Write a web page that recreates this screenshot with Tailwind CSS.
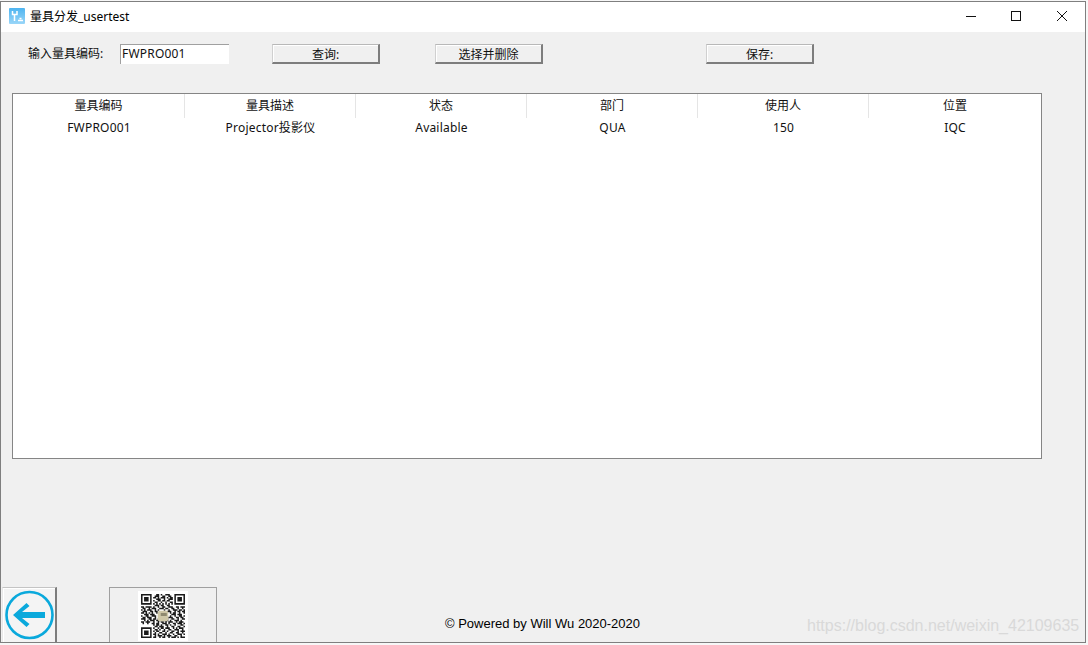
<!DOCTYPE html>
<html lang="zh">
<head>
<meta charset="utf-8">
<script src="https://cdn.jsdelivr.net/npm/@tailwindcss/browser@4"></script>
</head>
<body class="m-0 bg-[#f7f7f7]">
<div class="relative w-[1088px] h-[645px] overflow-hidden pt-px font-['Noto_Sans','Noto_Sans_CJK_SC',sans-serif] text-[12px] text-[#111]">
  <div class="flex flex-col w-[1086px] h-[642px] border border-[#7f7f7f] bg-[#f0f0f0]">
    <!-- title bar -->
    <div class="flex items-center h-[30px] shrink-0 bg-white">
      <svg class="ml-[8px] mb-[2px] w-4 h-4 shrink-0" viewBox="0 0 16 16">
        <defs><linearGradient id="g" x1="0" y1="0" x2="0" y2="1"><stop offset="0" stop-color="#4db4f0"/><stop offset="1" stop-color="#9ad6f8"/></linearGradient></defs>
        <rect width="16" height="16" rx="1" fill="url(#g)"/>
        <path d="M3.5 3v3.5h2.5M8 3v3.5h-2.5v6.5M9 12.5h5M10.5 10.5h2" stroke="#fff" stroke-width="1.5" fill="none"/>
      </svg>
      <span class="ml-[5px] text-[12px] text-black">量具分发_usertest</span>
      <div class="ml-auto flex items-center h-full">
        <svg class="w-[46px] h-[30px]" viewBox="0 0 46 30"><path d="M19 14.5h10" stroke="#111" fill="none"/></svg>
        <svg class="w-[46px] h-[30px]" viewBox="0 0 46 30"><rect x="18.5" y="9.5" width="9" height="9" stroke="#111" fill="none"/></svg>
        <svg class="w-[46px] h-[30px]" viewBox="0 0 46 30"><path d="M18 9l10 10M28 9l-10 10" stroke="#111" fill="none"/></svg>
      </div>
    </div>
    <!-- toolbar -->
    <div class="flex items-start h-[61px] shrink-0 pt-[12px]">
      <span class="ml-[27px] w-[92px] shrink-0 leading-[20px] text-[12px]">输入量具编码:</span>
      <div class="w-[109px] h-[20px] shrink-0 bg-white border-l border-t border-[#a0a0a0] pl-px leading-[18px] text-[12px] tracking-[0.2px]">FWPRO001</div>
      <button class="ml-[43px] w-[108px] h-[20px] shrink-0 bg-[#f0f0f0] border border-r-2 border-b-2 border-r-[#7d7d7d] border-b-[#7d7d7d] border-t-[#b8b8b8] border-l-[#d0d0d0] shadow-[inset_1px_1px_0_#fff] text-[12px] leading-[20px]">查询:</button>
      <button class="ml-[55px] w-[108px] h-[20px] shrink-0 bg-[#f0f0f0] border border-r-2 border-b-2 border-r-[#7d7d7d] border-b-[#7d7d7d] border-t-[#b8b8b8] border-l-[#d0d0d0] shadow-[inset_1px_1px_0_#fff] text-[12px] leading-[20px]">选择并删除</button>
      <button class="ml-[163px] w-[108px] h-[20px] shrink-0 bg-[#f0f0f0] border border-r-2 border-b-2 border-r-[#7d7d7d] border-b-[#7d7d7d] border-t-[#b8b8b8] border-l-[#d0d0d0] shadow-[inset_1px_1px_0_#fff] text-[12px] leading-[20px]">保存:</button>
    </div>
    <!-- table -->
    <div class="ml-[11px] w-[1030px] h-[366px] shrink-0 bg-white border border-[#858585]">
      <div class="grid grid-cols-[172px_171px_171px_171px_171px_1fr] h-[24px] text-center leading-[23px] text-[12px]">
        <div class="border-r border-[#e5e5e5]">量具编码</div>
        <div class="border-r border-[#e5e5e5]">量具描述</div>
        <div class="border-r border-[#e5e5e5]">状态</div>
        <div class="border-r border-[#e5e5e5]">部门</div>
        <div class="border-r border-[#e5e5e5]">使用人</div>
        <div>位置</div>
      </div>
      <div class="grid grid-cols-[172px_171px_171px_171px_171px_1fr] h-[20px] text-center leading-[19px] text-[12px] tracking-[0.2px]">
        <div>FWPRO001</div>
        <div>Projector投影仪</div>
        <div>Available</div>
        <div>QUA</div>
        <div>150</div>
        <div>IQC</div>
      </div>
    </div>
    <!-- footer -->
    <div class="flex flex-1 items-end">
      <div class="ml-px flex items-start justify-start w-[55px] h-[55px] shrink-0 bg-[#f4f4f4] border-t border-l border-t-[#c4c4c4] border-l-[#e8e8e8] border-r-2 border-r-[#7d7d7d] shadow-[inset_1px_1px_0_#fff] pl-[2px] pt-[2px]">
        <svg class="w-[49px] h-[50px] shrink-0" viewBox="0 0 49 50">
          <circle cx="24.5" cy="25" r="23" fill="none" stroke="#0aa9dc" stroke-width="2.6"/>
          <path d="M8 25 L21.5 13 L24.5 16 L17 22 H40 V28 H17 L24.5 34 L21.5 37 Z" fill="#0aa9dc"/>
        </svg>
      </div>
      <div class="ml-[52px] flex justify-center w-[108px] h-[55px] shrink-0 border border-b-0 border-[#a0a0a0] pt-[3px]">
        <svg class="w-[50px] h-[50px] bg-white" viewBox="0 0 33 33" shape-rendering="auto">
          <path stroke="#1a1a1a" stroke-width="1" fill="none" d="M2 2.5h7M12 2.5h2M15 2.5h1M18 2.5h3M24 2.5h7M2 3.5h1M8 3.5h1M11 3.5h3M16 3.5h2M20 3.5h2M24 3.5h1M30 3.5h1M2 4.5h1M4 4.5h3M8 4.5h1M10 4.5h2M13 4.5h1M15 4.5h3M19 4.5h1M21 4.5h2M24 4.5h1M26 4.5h3M30 4.5h1M2 5.5h1M4 5.5h3M8 5.5h1M12 5.5h3M17 5.5h1M20 5.5h3M24 5.5h1M26 5.5h3M30 5.5h1M2 6.5h1M4 6.5h3M8 6.5h1M10 6.5h1M13 6.5h2M16 6.5h2M19 6.5h2M24 6.5h1M26 6.5h3M30 6.5h1M2 7.5h1M8 7.5h1M11 7.5h2M15 7.5h1M18 7.5h1M21 7.5h2M24 7.5h1M30 7.5h1M2 8.5h7M10 8.5h1M12 8.5h1M14 8.5h1M16 8.5h1M18 8.5h1M20 8.5h1M22 8.5h1M24 8.5h7M11 9.5h3M15 9.5h2M19 9.5h2M2 10.5h2M5 10.5h4M10 10.5h1M13 10.5h1M16 10.5h2M20 10.5h3M25 10.5h2M28 10.5h3M3 11.5h2M7 11.5h1M9 11.5h3M14 11.5h3M18 11.5h2M22 11.5h2M26 11.5h1M29 11.5h1M2 12.5h1M4 12.5h1M6 12.5h3M11 12.5h1M13 12.5h1M17 12.5h1M20 12.5h1M23 12.5h3M27 12.5h2M30 12.5h1M3 13.5h3M8 13.5h2M11 13.5h2M19 13.5h3M24 13.5h1M26 13.5h2M29 13.5h2M2 14.5h2M5 14.5h1M7 14.5h1M9 14.5h1M12 14.5h1M21 14.5h1M23 14.5h2M27 14.5h1M30 14.5h1M4 15.5h3M8 15.5h3M22 15.5h3M26 15.5h3M2 16.5h1M5 16.5h2M9 16.5h3M21 16.5h1M24 16.5h1M27 16.5h2M30 16.5h1M3 17.5h2M6 17.5h3M11 17.5h1M20 17.5h3M25 17.5h2M28 17.5h2M2 18.5h3M7 18.5h2M10 18.5h2M13 18.5h1M19 18.5h1M22 18.5h2M26 18.5h1M29 18.5h2M4 19.5h1M6 19.5h1M8 19.5h3M12 19.5h3M17 19.5h3M21 19.5h1M24 19.5h3M28 19.5h1M2 20.5h2M5 20.5h3M10 20.5h1M13 20.5h1M15 20.5h2M18 20.5h1M20 20.5h3M25 20.5h1M27 20.5h3M3 21.5h1M6 21.5h1M9 21.5h2M12 21.5h2M16 21.5h3M20 21.5h1M23 21.5h2M26 21.5h3M30 21.5h1M10 22.5h1M12 22.5h2M15 22.5h1M18 22.5h2M21 22.5h1M24 22.5h1M28 22.5h2M11 23.5h2M14 23.5h3M19 23.5h1M22 23.5h2M26 23.5h2M30 23.5h1M2 24.5h7M10 24.5h1M13 24.5h1M15 24.5h2M18 24.5h3M23 24.5h1M25 24.5h1M27 24.5h3M2 25.5h1M8 25.5h1M11 25.5h2M14 25.5h1M17 25.5h1M20 25.5h2M24 25.5h3M29 25.5h1M2 26.5h1M4 26.5h3M8 26.5h1M10 26.5h1M12 26.5h2M16 26.5h2M19 26.5h1M22 26.5h2M26 26.5h1M28 26.5h3M2 27.5h1M4 27.5h3M8 27.5h1M11 27.5h1M14 27.5h2M18 27.5h1M21 27.5h2M25 27.5h2M29 27.5h1M2 28.5h1M4 28.5h3M8 28.5h1M10 28.5h2M13 28.5h1M16 28.5h3M20 28.5h1M23 28.5h1M26 28.5h3M30 28.5h1M2 29.5h1M8 29.5h1M11 29.5h1M13 29.5h3M17 29.5h1M19 29.5h3M24 29.5h2M28 29.5h1M2 30.5h7M10 30.5h2M14 30.5h1M16 30.5h2M20 30.5h1M22 30.5h3M26 30.5h1M28 30.5h3"/>
          <rect x="13" y="13" width="7" height="7" rx="1.5" fill="#cfc8a8"/>
          <rect x="15" y="14.5" width="4" height="2" fill="#8f8a70"/>
        </svg>
      </div>
      <span class="ml-[228px] mb-[9px] font-['Liberation_Sans',sans-serif] text-[13px] leading-[18px] text-black">© Powered by Will Wu 2020-2020</span>
    </div>
  </div>
  <span class="absolute left-[807px] top-[616px] font-['Liberation_Sans',sans-serif] text-[16px] leading-[20px] text-[#d9d9d9]">https://blog.csdn.net/weixin_42109635</span>
</div>
</body>
</html>
